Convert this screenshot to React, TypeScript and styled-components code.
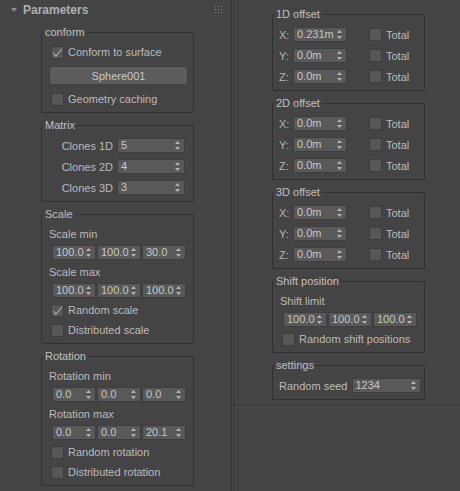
import React from "react";
import styled, { createGlobalStyle } from "styled-components";

const GlobalStyle = createGlobalStyle`
  html, body {
    margin: 0;
    padding: 0;
    background: #444444;
  }
  body {
    font-family: "Liberation Sans", Arial, sans-serif;
    font-size: 11px;
    color: #bcbcbc;
  }
`;

function Arrows() {
  return (
    <svg width="5" height="9" viewBox="0 0 5 9">
      <path d="M2.5 0 L5 3 L0 3 Z" fill="#b4b4b4" />
      <path d="M0 6 L5 6 L2.5 9 Z" fill="#b4b4b4" />
    </svg>
  );
}

function Spinner({ value, width }: { value: string; width: number }) {
  return (
    <SpinBox style={{ width }}>
      <span>{value}</span>
      <Arrows />
    </SpinBox>
  );
}

function Check({ checked, label }: { checked?: boolean; label?: string }) {
  return (
    <CheckWrap>
      <Box>
        {checked && (
          <svg width="11" height="11" viewBox="0 0 11 11">
            <path
              d="M1.5 5.5 L4 8.5 L9.5 1.5 L10 2.5 L4.2 10 L3.6 10 L1 6.6 Z"
              fill="#b0b0b0"
            />
          </svg>
        )}
      </Box>
      {label && <span>{label}</span>}
    </CheckWrap>
  );
}

function Triple({ values }: { values: string[] }) {
  return (
    <TripleRow>
      {values.map((v, i) => (
        <Spinner key={i} value={v} width={44} />
      ))}
    </TripleRow>
  );
}

function OffsetGroup({ title, x }: { title: string; x: string }) {
  return (
    <Group>
      <Legend>{title}</Legend>
      {["X:", "Y:", "Z:"].map((axis, i) => (
        <OffsetRow key={axis}>
          <AxisLabel>{axis}</AxisLabel>
          <Spinner value={i === 0 ? x : "0.0m"} width={54} />
          <Check label="Total" />
        </OffsetRow>
      ))}
    </Group>
  );
}

export default function App() {
  return (
    <>
      <GlobalStyle />
      <Page>
        <LeftPanel>
          <Header>
            <svg width="6" height="4" viewBox="0 0 6 4">
              <path d="M0 0 L6 0 L3 4 Z" fill="#8c8c8c" />
            </svg>
            <Title>Parameters</Title>
            <Grip width="7" height="7" viewBox="0 0 7 7">
              {[0, 3, 6].map(gx =>
                [0, 3, 6].map(gy => (
                  <rect key={`${gx}-${gy}`} x={gx} y={gy} width="1" height="1" fill="#8a8a8a" />
                ))
              )}
            </Grip>
          </Header>
          <Groups>
            <Group>
              <Legend>conform</Legend>
              <CheckRow>
                <Check checked label="Conform to surface" />
              </CheckRow>
              <ButtonRow>
                <PickButton>Sphere001</PickButton>
              </ButtonRow>
              <CheckRow>
                <Check label="Geometry caching" />
              </CheckRow>
            </Group>

            <Group>
              <Legend>Matrix</Legend>
              {[
                ["Clones 1D", "5"],
                ["Clones 2D", "4"],
                ["Clones 3D", "3"],
              ].map(([label, v]) => (
                <FieldRow key={label}>
                  <RightLabel>{label}</RightLabel>
                  <Spinner value={v} width={68} />
                </FieldRow>
              ))}
            </Group>

            <Group>
              <Legend>Scale</Legend>
              <SubLabel>Scale min</SubLabel>
              <Triple values={["100.0", "100.0", "30.0"]} />
              <SubLabel>Scale max</SubLabel>
              <Triple values={["100.0", "100.0", "100.0"]} />
              <CheckRow>
                <Check checked label="Random scale" />
              </CheckRow>
              <CheckRow>
                <Check label="Distributed scale" />
              </CheckRow>
            </Group>

            <Group>
              <Legend>Rotation</Legend>
              <SubLabel>Rotation min</SubLabel>
              <Triple values={["0.0", "0.0", "0.0"]} />
              <SubLabel>Rotation max</SubLabel>
              <Triple values={["0.0", "0.0", "20.1"]} />
              <CheckRow>
                <Check label="Random rotation" />
              </CheckRow>
              <CheckRow>
                <Check label="Distributed rotation" />
              </CheckRow>
            </Group>
          </Groups>
        </LeftPanel>

        <Gutter />

        <RightPanel>
          <Groups>
            <OffsetGroup title="1D offset" x="0.231m" />
            <OffsetGroup title="2D offset" x="0.0m" />
            <OffsetGroup title="3D offset" x="0.0m" />

            <Group>
              <Legend>Shift position</Legend>
              <SubLabel>Shift limit</SubLabel>
              <Triple values={["100.0", "100.0", "100.0"]} />
              <CheckRow>
                <Check label="Random shift positions" />
              </CheckRow>
            </Group>

            <Group>
              <Legend>settings</Legend>
              <SeedRow>
                <span>Random seed</span>
                <Spinner value="1234" width={69} />
              </SeedRow>
            </Group>
          </Groups>
          <Separator />
        </RightPanel>
      </Page>
    </>
  );
}

const Page = styled.div`
  display: grid;
  grid-template-columns: 232px 1px 1fr;
  height: 100vh;
  overflow: hidden;
`;

const LeftPanel = styled.div`
  box-sizing: border-box;
  padding-left: 4px;
  border-right: 1px solid #353535;
`;

const Gutter = styled.div`
  background: #4b4b4b;
`;

const RightPanel = styled.div`
  box-sizing: border-box;
  padding-top: 8px;
  border-left: 1px solid #353535;
  display: flex;
  flex-direction: column;
`;

const Header = styled.div`
  height: 20px;
  display: flex;
  align-items: center;
  padding-left: 7px;

  svg:first-child {
    margin-top: -1px;
  }
`;

const Title = styled.span`
  margin-left: 6px;
  font-size: 12px;
  font-weight: bold;
  color: #aeb0b4;
`;

const Grip = styled.svg`
  margin-left: auto;
  margin-right: 9px;
  margin-top: -2px;
`;

const Groups = styled.div`
  display: flex;
  flex-direction: column;
  gap: 6px;
  padding-top: 6px;

  ${RightPanel} & {
    padding-top: 0;
    padding-left: 3px;
  }
`;

const Group = styled.fieldset`
  width: 153px;
  box-sizing: border-box;
  margin: 0 auto;
  padding: 3px 0 3px 0;
  border: 1px solid #2f2f2f;
  border-radius: 2px;
  min-inline-size: auto;
`;

const Legend = styled.legend`
  margin-left: 1px;
  padding: 0 2px;
  line-height: 13px;
  font-size: 11px;
  color: #c0c0c0;
`;

const SpinBox = styled.div`
  box-sizing: border-box;
  height: 15px;
  display: flex;
  align-items: center;
  justify-content: space-between;
  padding: 0 4px 0 3px;
  background: #595959;
  border: 1px solid #3d3d3d;
  color: #c8c8c8;
  font-size: 11px;
  line-height: 13px;
`;

const CheckWrap = styled.div`
  display: flex;
  align-items: center;
  gap: 4px;
`;

const Box = styled.div`
  box-sizing: border-box;
  width: 13px;
  height: 13px;
  background: #575757;
  border: 1px solid #3d3d3d;
  display: flex;
  align-items: center;
  justify-content: center;
`;

const CheckRow = styled.div`
  height: 20px;
  display: flex;
  align-items: center;
  padding-left: 9px;
`;

const ButtonRow = styled.div`
  height: 27px;
  display: flex;
  align-items: center;
  padding: 0 5px 0 7px;
`;

const PickButton = styled.div`
  flex: 1;
  height: 19px;
  display: flex;
  align-items: center;
  justify-content: center;
  background: #5c5c5c;
  border: 1px solid #3e3e3e;
  border-radius: 3px;
  box-sizing: border-box;
  color: #c8c8c8;
`;

const FieldRow = styled.div`
  height: 21px;
  display: grid;
  grid-template-columns: 71px 68px;
  column-gap: 4px;
  align-items: center;
`;

const RightLabel = styled.span`
  text-align: right;
`;

const SubLabel = styled.div`
  height: 19px;
  display: flex;
  align-items: center;
  padding-left: 7px;
`;

const TripleRow = styled.div`
  height: 19px;
  display: flex;
  align-items: center;
  gap: 1px;
  padding-left: 10px;
`;

const OffsetRow = styled.div`
  height: 21px;
  display: flex;
  align-items: center;
  padding-left: 6px;

  & > :nth-child(3) {
    margin-left: 22px;
  }
`;

const AxisLabel = styled.span`
  width: 14px;
  color: #b4b4b4;
`;

const SeedRow = styled.div`
  height: 21px;
  display: flex;
  align-items: center;
  gap: 4px;
  padding-left: 6px;
`;

const Separator = styled.div`
  margin-top: 5px;
  height: 1px;
  border-top: 1px solid #353535;
  background: #4e4e4e;
`;
